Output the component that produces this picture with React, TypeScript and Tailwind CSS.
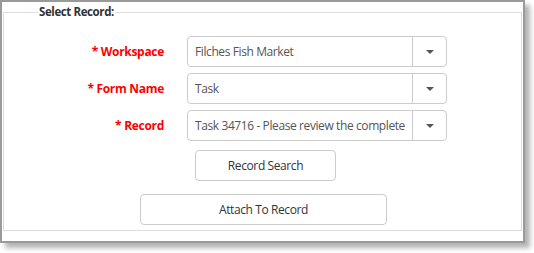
import React from "react";

const font = { fontFamily: '"Segoe UI", "Open Sans", "Noto Sans", sans-serif' };

function Caret() {
  return (
    <svg width="8" height="4" viewBox="0 0 8 4" className="block">
      <path d="M0 0 H8 L4 4 Z" fill="#555" />
    </svg>
  );
}

function Row({ label, value, mt }: { label: string; value: string; mt: string }) {
  return (
    <div className={`flex items-center ${mt}`}>
      <div className="w-[160px] text-right text-[12px] tracking-[-0.3px] font-bold text-[#ff0000] leading-none">* {label}</div>
      <div className="ml-[23px] w-[260px] h-[31px] flex border border-[#cccccc] rounded-[4px] bg-white">
        <div className="flex-1 min-w-0 overflow-hidden whitespace-nowrap text-[12px] tracking-[-0.4px] text-[#555555] pl-[7px] flex items-center">
          {value}
        </div>
        <div className="w-[34px] border-l border-[#cccccc] flex items-center justify-center">
          <Caret />
        </div>
      </div>
    </div>
  );
}

export default function App() {
  return (
    <div className="w-[534px] h-[253px] bg-white" style={font}>
      <div className="w-[525px] h-[243px] border-2 border-[#9a9a9a] bg-white shadow-[5px_5px_5px_rgba(0,0,0,0.3)] pl-[1px] pr-[1px]">
        <fieldset className="border border-[#dddddd] h-[227px] mt-[2px]">
          <legend className="ml-[34px] px-[1px] text-[11.5px] tracking-[-0.4px] font-bold text-[#333333] leading-[16px]">Select Record:</legend>
          <div className="pt-[16px]">
            <Row label="Workspace" value="Filches Fish Market" mt="mt-0" />
            <Row label="Form Name" value="Task" mt="mt-[6px]" />
            <Row label="Record" value="Task 34716 - Please review the complete" mt="mt-[6px]" />
            <div className="mt-[9px] ml-[191px] w-[141px] h-[31px] border border-[#cccccc] rounded-[4px] flex items-center justify-center text-[12px] tracking-[-0.4px] text-[#333333]">
              Record Search
            </div>
            <div className="mt-[13px] ml-[136px] w-[247px] h-[31px] border border-[#cccccc] rounded-[4px] flex items-center justify-center text-[12px] tracking-[-0.4px] text-[#333333]">
              Attach To Record
            </div>
          </div>
        </fieldset>
      </div>
    </div>
  );
}
